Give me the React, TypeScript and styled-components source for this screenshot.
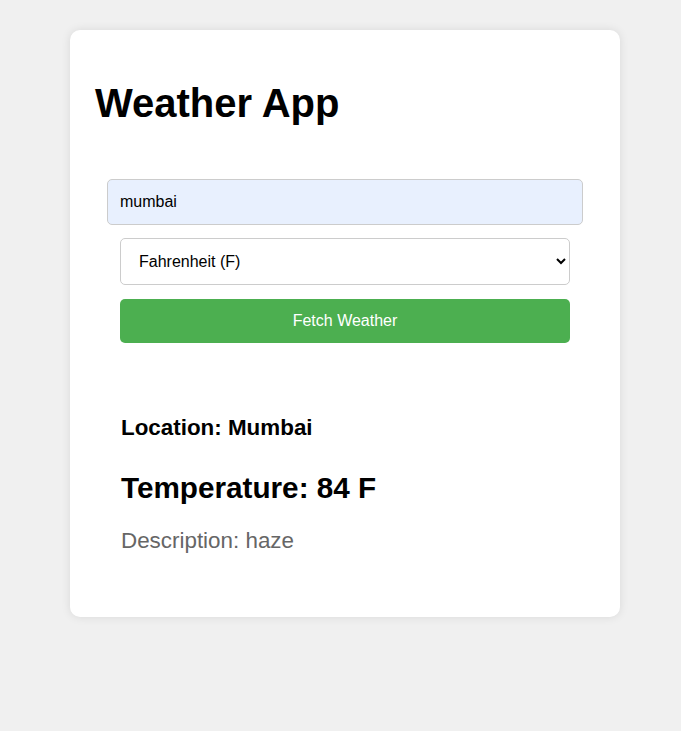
import React, { useState } from "react";
import styled, { createGlobalStyle } from "styled-components";

const GlobalStyle = createGlobalStyle`
    html, body {
        margin: 0;
        background: #f0f0f0;
        font-family: "Liberation Sans", Arial, sans-serif;
    }
`;

export default function App() {
    const [city, setCity] = useState("mumbai");
    const [unit, setUnit] = useState("F");

    return (
        <Page>
            <GlobalStyle />
            <Card>
                <Title>Weather App</Title>
                <Form onSubmit={(e) => e.preventDefault()}>
                    <CityInput
                        type="text"
                        value={city}
                        onChange={(e) => setCity(e.target.value)}
                    />
                    <UnitSelect value={unit} onChange={(e) => setUnit(e.target.value)}>
                        <option value="C">Celsius (C)</option>
                        <option value="F">Fahrenheit (F)</option>
                    </UnitSelect>
                    <FetchBtn type="submit">Fetch Weather</FetchBtn>
                </Form>
                <Result>
                    <Location>Location: Mumbai</Location>
                    <Temperature>Temperature: 84 {unit}</Temperature>
                    <Description>Description: haze</Description>
                </Result>
            </Card>
        </Page>
    );
}

const Page = styled.div`
    min-height: 731px;
    padding: 30px 0 0 70px;
    box-sizing: border-box;
`;
const Card = styled.div`
    width: 550px;
    box-sizing: border-box;
    background: #fff;
    border-radius: 10px;
    box-shadow: 0 0 10px rgba(0, 0, 0, 0.1);
    padding: 20px 25px 63px;
    display: flex;
    flex-direction: column;
`;
const Title = styled.h1`
    margin: 31px 0 0;
    font-size: 40px;
    font-weight: 700;
    color: #000;
`;
const Form = styled.form`
    margin-top: 53px;
    padding: 0 12px;
    display: flex;
    flex-direction: column;
    gap: 13px;
`;
const CityInput = styled.input`
    height: 46px;
    box-sizing: border-box;
    padding: 0 12px;
    border: 1px solid #ccc;
    border-radius: 5px;
    background: #e8f0fe;
    font-family: "Liberation Sans", Arial, sans-serif;
    font-size: 16px;
    color: #000;
    &:focus {
        outline: none;
    }
`;
const UnitSelect = styled.select`
    margin: 0 13px;
    height: 47px;
    box-sizing: border-box;
    padding: 0 14px;
    border: 1px solid #ccc;
    border-radius: 5px;
    background: #fff;
    font-family: "Liberation Sans", Arial, sans-serif;
    font-size: 16px;
    color: #000;
`;
const FetchBtn = styled.button`
    margin: 1px 13px 0;
    height: 44px;
    border: none;
    border-radius: 5px;
    background: #4caf50;
    color: #fff;
    font-family: "Liberation Sans", Arial, sans-serif;
    font-size: 16px;
    cursor: pointer;
`;
const Result = styled.div`
    margin-top: 72px;
    padding-left: 26px;
    display: flex;
    flex-direction: column;
`;
const Location = styled.h3`
    margin: 0;
    font-size: 22.4px;
    font-weight: 700;
    color: #000;
`;
const Temperature = styled.h2`
    margin: 30px 0 0;
    font-size: 29.7px;
    font-weight: 700;
    color: #000;
`;
const Description = styled.p`
    margin: 23px 0 0;
    font-size: 22.4px;
    color: #666;
`;
